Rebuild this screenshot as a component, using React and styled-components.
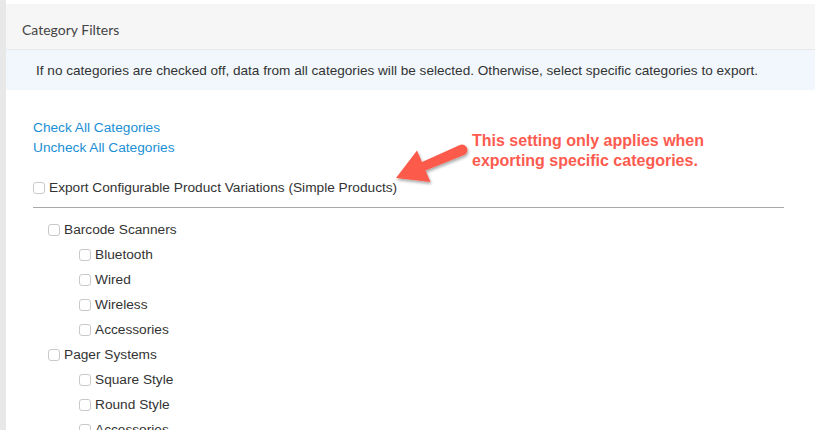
import React from "react";
import styled, { createGlobalStyle } from "styled-components";

const Global = createGlobalStyle`
  html, body { margin: 0; padding: 0; background: #fff; }
  body { font-family: "Liberation Sans", Arial, sans-serif; color: #333; }
`;

const Page = styled.div`
  display: flex;
  min-height: 430px;
  position: relative;
  overflow: hidden;
`;

const SideStrip = styled.div`
  width: 6px;
  flex: none;
  background: #e8e8e8;
`;

const Main = styled.div`
  flex: 1;
  padding-top: 4px;
`;

const PanelHeader = styled.div`
  height: 46px;
  display: flex;
  align-items: center;
  padding: 5px 0 0 16px;
  background: #f6f6f6;
  border-bottom: 1px solid #e9e9e9;
  font-family: Lato, "Open Sans", sans-serif;
  font-size: 14px;
  color: #444;
  box-sizing: border-box;
`;

const InfoBar = styled.div`
  height: 40px;
  display: flex;
  align-items: center;
  padding-left: 30px;
  background: #f1f7fc;
  font-size: 13.6px;
  color: #333;
`;

const Body = styled.div`
  padding: 28px 31px 0 27px;
`;

const LinkList = styled.div`
  display: flex;
  flex-direction: column;
`;

const TextLink = styled.a`
  font-size: 13.7px;
  line-height: 20px;
  color: #1b8fd5;
  text-decoration: none;
  cursor: pointer;
`;

const CheckRow = styled.label`
  display: flex;
  align-items: center;
  gap: 4px;
  height: ${(p) => p.$h || 25}px;
  padding-left: ${(p) => p.$indent || 0}px;
  font-size: 13.7px;
  color: #333;
`;

const Box = styled.input.attrs({ type: "checkbox" })`
  appearance: none;
  -webkit-appearance: none;
  margin: 1px 0 0 0;
  width: 12px;
  height: 12px;
  flex: none;
  border: 1px solid #c9c9c9;
  border-radius: 3px;
  background: #fff;
  box-sizing: border-box;
`;

const ExportRow = styled(CheckRow)`
  margin-top: 19px;
`;

const Divider = styled.hr`
  border: 0;
  border-top: 1px solid #a9a9a9;
  margin: 10px 0 9px 0;
`;

const Tree = styled.div`
  display: flex;
  flex-direction: column;
`;

const Callout = styled.div`
  position: absolute;
  left: 472px;
  top: 131px;
  font-size: 16px;
  line-height: 20px;
  font-weight: bold;
  color: #fd5b4f;
`;

const ArrowSvg = styled.svg`
  position: absolute;
  left: 388px;
  top: 138px;
  overflow: visible;
`;

const tree = [
  { name: "Barcode Scanners", children: ["Bluetooth", "Wired", "Wireless", "Accessories"] },
  { name: "Pager Systems", children: ["Square Style", "Round Style", "Accessories"] },
];

export default function App() {
  return (
    <>
      <Global />
      <Page>
        <SideStrip />
        <Main>
          <PanelHeader>Category Filters</PanelHeader>
          <InfoBar>
            If no categories are checked off, data from all categories will be selected. Otherwise, select specific categories to export.
          </InfoBar>
          <Body>
            <LinkList>
              <TextLink>Check All Categories</TextLink>
              <TextLink>Uncheck All Categories</TextLink>
            </LinkList>
            <ExportRow $h={20}>
              <Box />
              Export Configurable Product Variations (Simple Products)
            </ExportRow>
            <Divider />
            <Tree>
              {tree.map((cat) => (
                <React.Fragment key={cat.name}>
                  <CheckRow $indent={15}>
                    <Box />
                    {cat.name}
                  </CheckRow>
                  {cat.children.map((c, i) => (
                    <CheckRow key={cat.name + i} $indent={46}>
                      <Box />
                      {c}
                    </CheckRow>
                  ))}
                </React.Fragment>
              ))}
            </Tree>
          </Body>
        </Main>
        <Callout>
          This setting only applies when
          <br />
          exporting specific categories.
        </Callout>
        <ArrowSvg width="84" height="52" viewBox="388 138 84 52">
          <defs>
            <filter id="sh" x="-20%" y="-20%" width="150%" height="160%">
              <feDropShadow dx="1" dy="2" stdDeviation="1.5" floodColor="#000" floodOpacity="0.35" />
            </filter>
          </defs>
          <path
            d="M396 178 L417 150.5 L422 162 L459.9 144.9 A5.5 5.5 0 0 1 464.1 155.1 L425.5 170.5 L430.5 182 Z"
            fill="#fc5a4c"
            filter="url(#sh)"
          />
        </ArrowSvg>
      </Page>
    </>
  );
}
